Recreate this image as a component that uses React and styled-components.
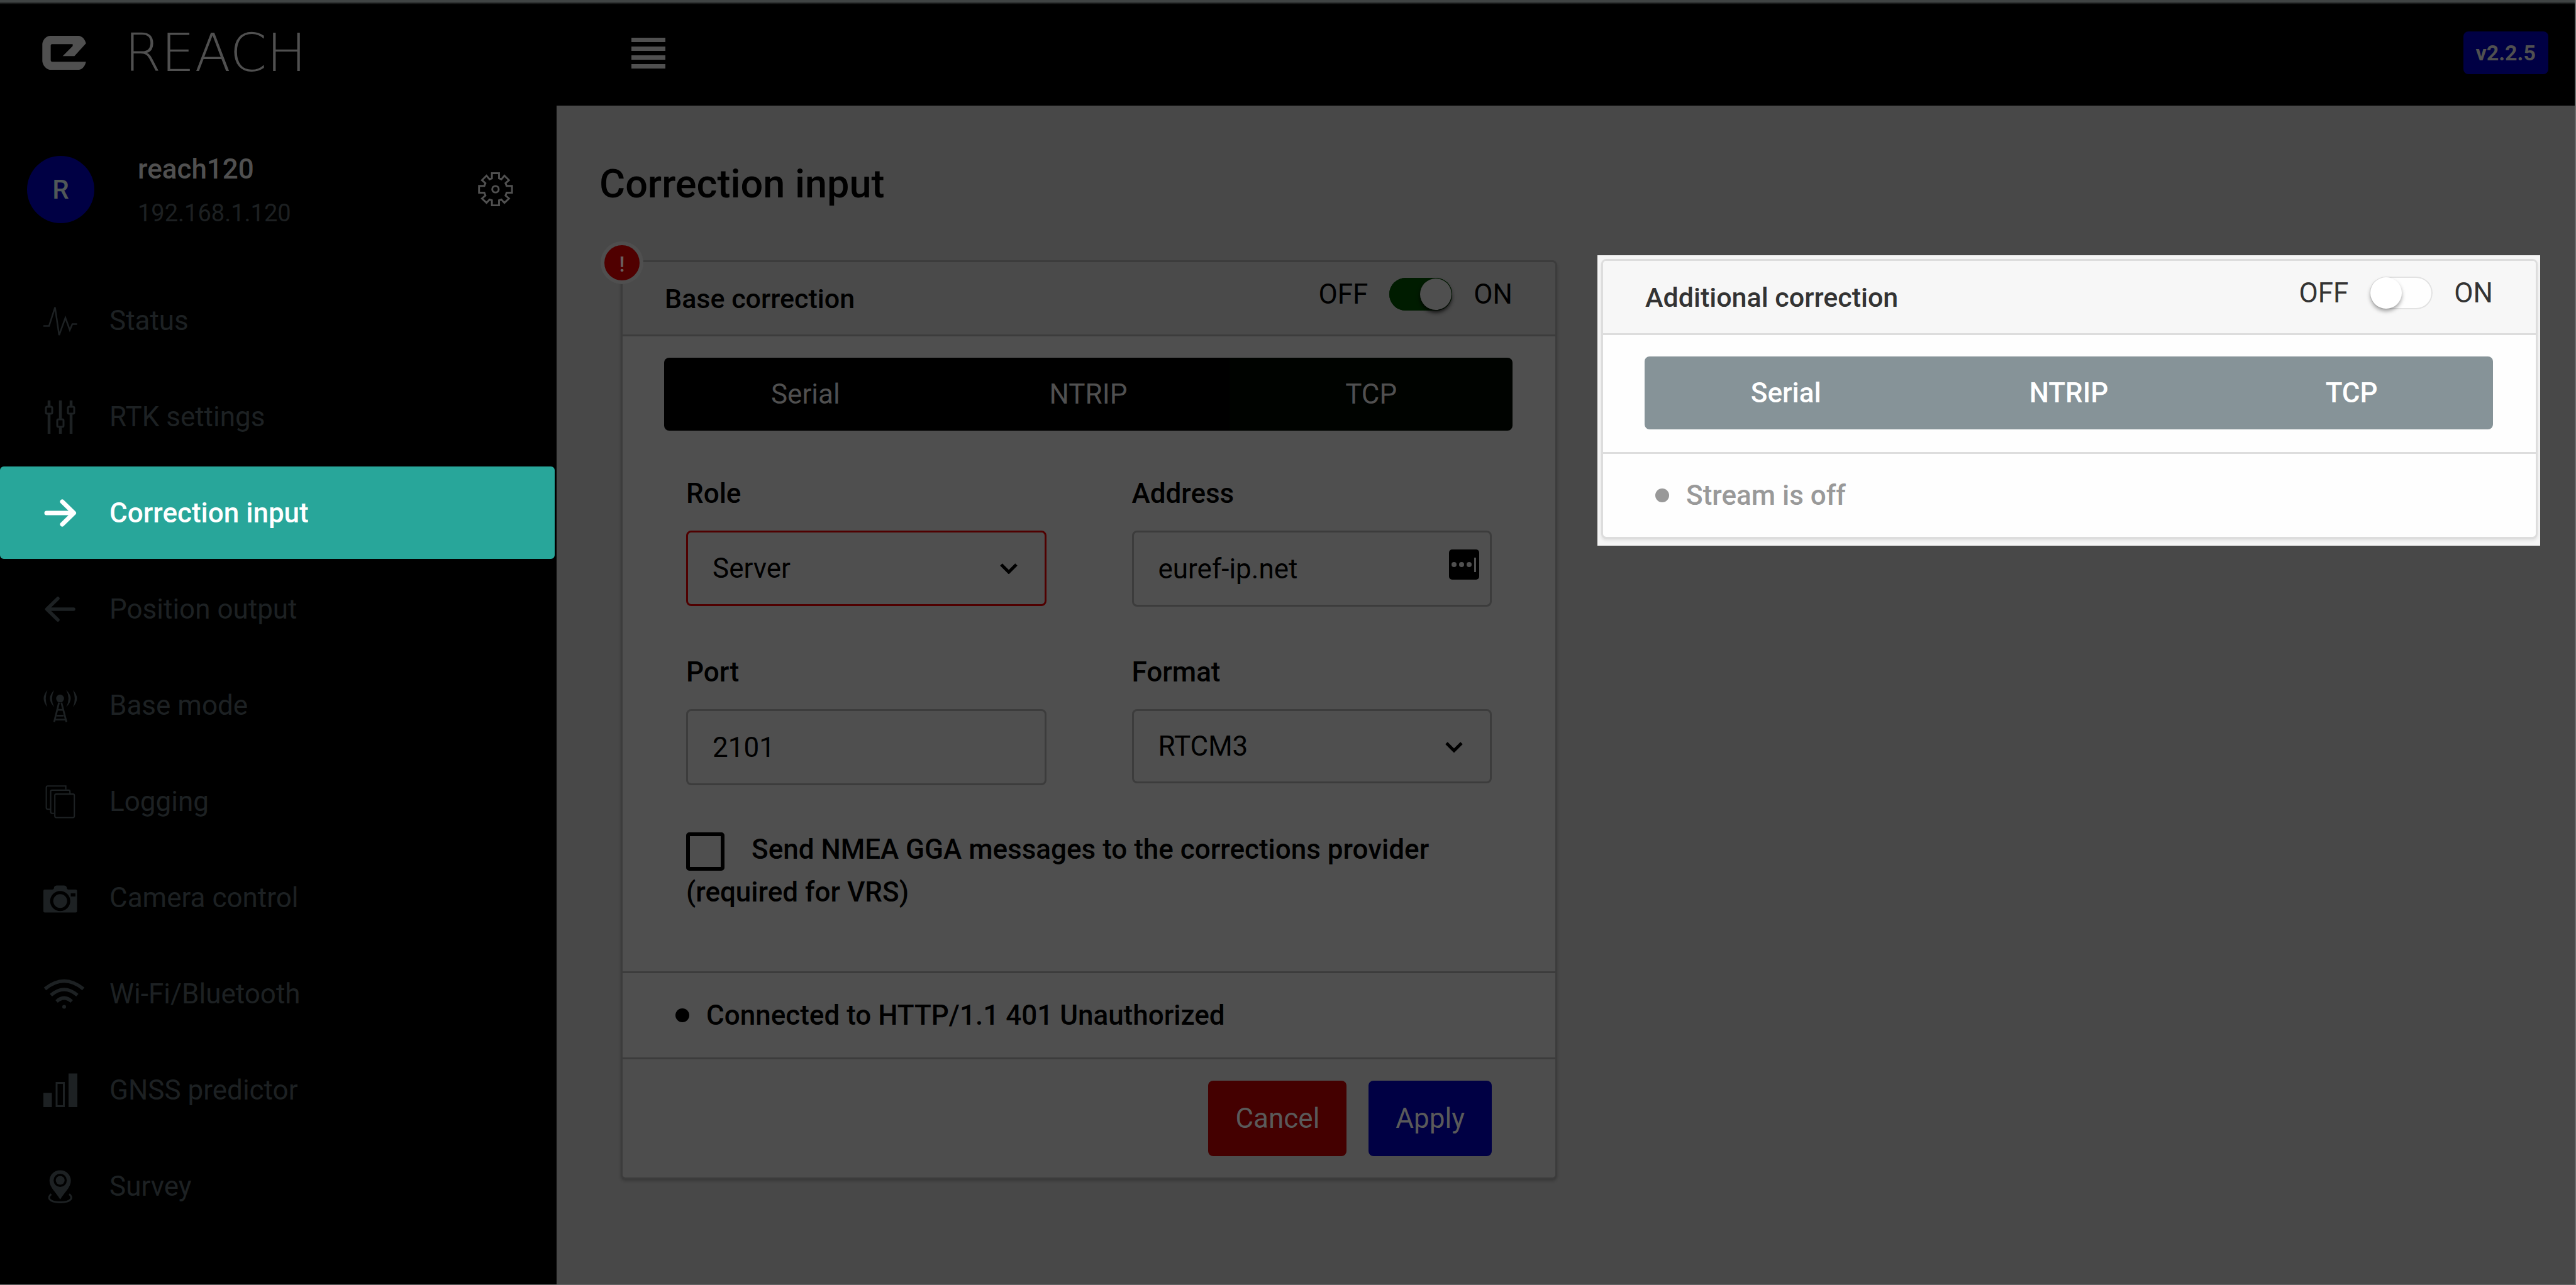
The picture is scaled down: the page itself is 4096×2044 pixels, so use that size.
import React from "react";
import styled, { createGlobalStyle } from "styled-components";

const GlobalStyle = createGlobalStyle`
  *, *::before, *::after { box-sizing: border-box; }
  html, body { margin: 0; background: #484848; }
  body, button, input, select {
    font-family: Roboto, "Liberation Sans", sans-serif;
    font-size: 44px;
    font-weight: 400;
  }
`;

const Page = styled.div`
  display: grid;
  grid-template-columns: 885px 1fr;
  grid-template-rows: 168px 1fr;
  min-height: 100vh;
  border-right: 2px solid #6c6c6c;
  border-bottom: 1px solid #6c6c6c;
  background: #484848;
`;

const Header = styled.header`
  grid-column: 1 / -1;
  display: grid;
  grid-template-columns: 885px 1fr;
  align-items: center;
  background: linear-gradient(#404444 0, #404444 3px, #000 7px);
`;

const Brand = styled.a`
  display: flex;
  align-items: center;
  gap: 61px;
  padding-left: 67px;
  color: #505050;
  text-decoration: none;
`;

const Wordmark = styled.span`
  font-family: "DejaVu Sans", sans-serif;
  font-size: 84px;
  font-weight: 200;
  line-height: 84px;
`;

const HeaderBar = styled.div`
  display: flex;
  align-items: center;
  justify-content: space-between;
  padding: 0 42px 0 119px;
`;

const IconButton = styled.button`
  display: flex;
  padding: 0;
  border: 0;
  background: none;
  color: #505050;
`;

const Version = styled.span`
  padding: 0 20px;
  border-radius: 8px;
  background: #000044;
  color: #505050;
  font-size: 34px;
  font-weight: 700;
  line-height: 68px;
`;

const Sidebar = styled.aside`
  padding-top: 60px;
  background: #000;
`;

const Profile = styled.div`
  display: flex;
  align-items: center;
  gap: 69px;
  padding: 0 69px 0 43px;
`;

const Avatar = styled.div`
  width: 107px;
  height: 107px;
  border-radius: 50%;
  background: #000044;
  color: #505858;
  font-size: 42px;
  font-weight: 500;
  line-height: 107px;
  text-align: center;
`;

const Identity = styled.div`
  flex: 1;
  padding-top: 6px;
  line-height: 70px;
`;

const DeviceName = styled.div`
  color: #505050;
  font-weight: 500;
`;

const DeviceAddress = styled.div`
  color: #1d2022;
  font-size: 38px;
`;

const Nav = styled.nav`
  display: flex;
  flex-direction: column;
  gap: 6px;
  margin: 62px 3px 0 0;
`;

const NavLink = styled.a`
  display: flex;
  align-items: center;
  gap: 51px;
  height: 147px;
  padding-left: 69px;
  border-radius: 6px;
  background: ${(p) => (p.$active ? "#28a69a" : "transparent")};
  color: ${(p) => (p.$active ? "#fff" : "#1d2123")};
  font-weight: ${(p) => (p.$active ? 500 : 400)};
  text-decoration: none;
`;

const NavIcon = styled.svg`
  flex: none;
  width: 54px;
  height: 54px;
  overflow: visible;
  fill: none;
  stroke: currentColor;
`;

const Main = styled.main`
  padding: 87px 59px 0 68px;
`;

const Title = styled.h1`
  margin: 0 0 83px;
  color: #000;
  font-size: 63px;
  font-weight: 500;
  line-height: 76px;
`;

const Cards = styled.div`
  display: grid;
  grid-template-columns: 1fr 1fr;
  align-items: start;
  gap: 70px;
  padding-left: 34px;
`;

const Card = styled.section`
  position: relative;
  border: 3px solid ${(p) => (p.$lit ? "#dddddd" : "#3c3c3c")};
  border-radius: 8px;
  background: ${(p) => (p.$lit ? "#fefefe" : "#4f4f4f")};
  box-shadow: 0 3px 4px ${(p) => (p.$lit ? "rgba(0, 0, 0, 0.08)" : "rgba(0, 0, 0, 0.2)")};
  color: ${(p) => (p.$lit ? "#333333" : "#000")};
`;

const Spotlight = styled.div`
  margin: -8px -4px 0 -6px;
  padding: 6px 4px 11px 6px;
  background: #f5f5f5;
`;

const AlertBadge = styled.span`
  position: absolute;
  top: -33px;
  left: -35px;
  width: 68px;
  height: 68px;
  border: 6px solid #4f4f4f;
  border-radius: 50%;
  background: #500000;
  color: #6a6060;
  font-size: 34px;
  font-weight: 500;
  line-height: 60px;
  text-align: center;
`;

const CardHeader = styled.header`
  display: flex;
  align-items: center;
  justify-content: space-between;
  height: 118px;
  padding: 0 68px 0 67px;
  border-bottom: 3px solid ${(p) => (p.$lit ? "#dddddd" : "#3c3c3c")};
  border-radius: 5px 5px 0 0;
  background: ${(p) => (p.$lit ? "#f7f7f7" : "#4a4a4a")};
`;

const CardTitle = styled.h2`
  margin: 0;
  font-size: 43px;
  font-weight: 500;
`;

const SwitchLabel = styled.label`
  display: flex;
  align-items: center;
  gap: 34px;
  margin-bottom: 14px;
`;

const Switch = styled.input`
  appearance: none;
  display: flex;
  justify-content: ${(p) => (p.checked ? "flex-end" : "flex-start")};
  width: 100px;
  height: 52px;
  margin: 0;
  padding: 1px;
  border-radius: 26px;
  background: ${(p) => (p.checked ? "#001c00" : "#fefefe")};
  box-shadow: 0 0 0 2px ${(p) => (p.$lit ? "#e2e2e2" : "#001c00")} inset;

  &::before {
    content: "";
    width: 50px;
    height: 50px;
    border-radius: 50%;
    background: ${(p) => (p.$lit ? "#fff" : "#4f4f4f")};
    box-shadow: 0 4px 6px ${(p) => (p.$lit ? "rgba(0, 0, 0, 0.35)" : "rgba(0, 0, 0, 0.8)")};
  }
`;

const Tabs = styled.div`
  display: grid;
  grid-template-columns: repeat(3, 1fr);
  margin: 34px 68px 0 66px;
  overflow: hidden;
  border-radius: 8px;
`;

const Tab = styled.button`
  height: 116px;
  padding: 0;
  border: 0;
  background: ${(p) => (p.$lit ? "#869398" : p.$active ? "#000300" : "#000")};
  color: ${(p) => (p.$lit ? "#fff" : "#505050")};
  font-weight: ${(p) => (p.$lit ? 500 : 400)};
`;

const Form = styled.form`
  padding: 0 101px;
`;

const Fields = styled.div`
  display: grid;
  grid-template-columns: 1fr 1fr;
  align-items: start;
  gap: 74px 136px;
  padding-top: 70px;
`;

const Field = styled.div`
  display: flex;
  flex-direction: column;
  gap: 29px;
`;

const FieldLabel = styled.label`
  font-weight: 500;
  line-height: 60px;
`;

const Control = styled.div`
  position: relative;
`;

const TextBox = styled.input`
  display: block;
  width: 100%;
  height: 121px;
  padding: 0 39px;
  border: 3px solid #3c3c3c;
  border-radius: 8px;
  background: transparent;
  color: #000;
`;

const Select = styled.select`
  appearance: none;
  display: block;
  width: 100%;
  height: ${(p) => (p.$invalid ? 120 : 118)}px;
  padding: 0 39px;
  border: 3px solid ${(p) => (p.$invalid ? "#500000" : "#3c3c3c")};
  border-radius: 8px;
  background: transparent;
  color: #000;
`;

const Chevron = styled.svg`
  position: absolute;
  top: 51px;
  right: 46px;
  width: 28px;
  height: 18px;
  fill: none;
  stroke: #000;
  stroke-width: 5;
  pointer-events: none;
`;

const Filler = styled.svg`
  position: absolute;
  top: 30px;
  right: 20px;
  width: 48px;
  height: 48px;
`;

const CheckLabel = styled.label`
  display: block;
  margin-top: 68px;
  font-weight: 500;
  line-height: 68px;
`;

const Checkbox = styled.input`
  appearance: none;
  width: 61px;
  height: 61px;
  margin: 0 43px 0 0;
  border: 6px solid #000;
  border-radius: 5px;
  vertical-align: middle;
`;

const Status = styled.div`
  display: flex;
  align-items: center;
  gap: 27px;
  height: ${(p) => (p.$lit ? 135 : 137)}px;
  margin-top: ${(p) => (p.$lit ? 36 : 92)}px;
  padding-left: ${(p) => (p.$lit ? 83 : 84)}px;
  border-top: 3px solid ${(p) => (p.$lit ? "#dddddd" : "#3c3c3c")};
  color: ${(p) => (p.$lit ? "#999999" : "#000")};
  font-weight: 500;

  &::before {
    content: "";
    width: 22px;
    height: 22px;
    border-radius: 50%;
    background: currentColor;
  }
`;

const Actions = styled.footer`
  display: flex;
  justify-content: flex-end;
  gap: 35px;
  padding: 34px 101px;
  border-top: 3px solid #3c3c3c;
  border-radius: 0 0 5px 5px;
  background: #4d4d4d;
`;

const ActionButton = styled.button`
  height: 120px;
  padding: 0 43px;
  border: 0;
  border-radius: 8px;
  background: ${(p) => (p.$danger ? "#440000" : "#000044")};
  color: #5a5a5a;
`;

const icons = {
  status: (
    <path strokeWidth="2.5" d="M0 35.5H9L18.5 6L25 50L35 22.5L42 42L46 32.5H53.5" />
  ),
  sliders: (
    <g strokeWidth="3">
      <path strokeWidth="4.5" d="M9 1V11M9 22V54M27 1V31M27 43V54M44 1V11M44 22V54" />
      <rect x="4" y="11" width="10" height="11" rx="2" />
      <rect x="22" y="31" width="10" height="12" rx="2" />
      <rect x="39" y="11" width="10" height="11" rx="2" />
    </g>
  ),
  right: (
    <path strokeWidth="7" strokeLinecap="round" strokeLinejoin="round" d="M5 27H48M30 9L48.500 27L30 45" />
  ),
  left: (
    <path strokeWidth="5.500" strokeLinecap="round" strokeLinejoin="round" d="M48 27H6M23 10L5.500 27L23 44" />
  ),
  antenna: (
    <g>
      <circle cx="188" cy="128" r="36" fill="currentColor" stroke="none" />
      <path strokeWidth="16" d="M178 165L134 342M200 165L246 342M168 232H210M158 284H220M146 320H234" />
      <path
        fill="currentColor"
        stroke="none"
        d="M72 52Q4 128 72 206Q42 128 72 52ZM134 52Q56 128 134 206Q94 128 134 52ZM244 52Q326 128 244 206Q286 128 244 52ZM306 52Q378 128 306 206Q338 128 306 52Z"
      />
    </g>
  ),
  logging: (
    <g strokeWidth="12">
      <rect x="140" y="1006" width="178" height="214" rx="12" />
      <path d="M278 1000V984Q278 970 266 970H114Q102 970 102 982V1168Q102 1182 114 1182H136" />
      <path d="M240 964V932H76Q62 932 62 946V1132Q62 1144 76 1144H98" />
    </g>
  ),
  camera: (
    <g stroke="none" fill="currentColor">
      <path
        fillRule="evenodd"
        d="M2 14H14Q17 14 17 10Q18 7.500 21 7.500H33Q36 7.500 37 10Q37 14 40 14H51.500Q53.500 14 53.500 16V48.500Q53.500 50.500 51.500 50.500H2Q0 50.500 0 48.500V16Q0 14 2 14ZM43.500 20V25H51V20ZM26.700 16.200A16 16 0 1 0 26.700 48.200A16 16 0 1 0 26.700 16.200Z"
      />
      <circle cx="26.7" cy="32.2" r="11" />
    </g>
  ),
  wifi: (
    <g strokeWidth="5.500">
      <path d="M2.500 19Q33 -6 63.500 19M12 29Q33 11 54 29M21 39Q33 28 45 39" />
      <circle cx="33" cy="47.500" r="3" fill="currentColor" stroke="none" />
    </g>
  ),
  bars: (
    <g>
      <path fill="currentColor" stroke="none" d="M0 31.500H13.500V54H0ZM40 0.500H54V54H40Z" />
      <rect x="21" y="15.500" width="11.500" height="37" strokeWidth="3" />
    </g>
  ),
  pin: (
    <g>
      <path
        fill="currentColor"
        stroke="none"
        fillRule="evenodd"
        d="M26.700 1.500C36.500 1.500 43.700 9 43.700 18C43.700 29 33 37 26.700 48C20.500 37 9.700 29 9.700 18C9.700 9 17 1.500 26.700 1.500ZM26.700 7A10.500 10.500 0 1 0 26.700 28A10.500 10.500 0 1 0 26.700 7Z"
      />
      <circle cx="26.700" cy="17.500" r="7" fill="currentColor" stroke="none" />
      <path strokeWidth="3" d="M12.500 39.500C6 44 7.500 52.500 26.700 52.500S47.500 44 41 39.500" />
    </g>
  ),
};

const navItems = [
  { label: "Status", icon: "status" },
  { label: "RTK settings", icon: "sliders" },
  { label: "Correction input", icon: "right", active: true },
  { label: "Position output", icon: "left" },
  { label: "Base mode", icon: "antenna", box: "35.600 35.600 310 310" },
  { label: "Logging", icon: "logging", box: "35.600 919 310 310" },
  { label: "Camera control", icon: "camera" },
  { label: "Wi-Fi/Bluetooth", icon: "wifi" },
  { label: "GNSS predictor", icon: "bars" },
  { label: "Survey", icon: "pin" },
];

const streams = ["Serial", "NTRIP", "TCP"];

function StreamTabs({ active, lit }) {
  return (
    <Tabs>
      {streams.map((name) => (
        <Tab key={name} type="button" $active={name === active} $lit={lit}>
          {name}
        </Tab>
      ))}
    </Tabs>
  );
}

function StreamHeader({ title, on, lit }) {
  return (
    <CardHeader $lit={lit}>
      <CardTitle>{title}</CardTitle>
      <SwitchLabel>
        <span>OFF</span>
        <Switch type="checkbox" role="switch" checked={on} readOnly $lit={lit} />
        <span>ON</span>
      </SwitchLabel>
    </CardHeader>
  );
}

function SelectField({ id, label, value, invalid }) {
  return (
    <Field>
      <FieldLabel htmlFor={id}>{label}</FieldLabel>
      <Control>
        <Select id={id} defaultValue={value} $invalid={invalid}>
          <option>{value}</option>
        </Select>
        <Chevron viewBox="0 0 28 18">
          <path d="M2 3L14 15L26 3" />
        </Chevron>
      </Control>
    </Field>
  );
}

function TextField({ id, label, value, children }) {
  return (
    <Field>
      <FieldLabel htmlFor={id}>{label}</FieldLabel>
      <Control>
        <TextBox id={id} type="text" defaultValue={value} />
        {children}
      </Control>
    </Field>
  );
}

export default function App() {
  return (
    <>
      <GlobalStyle />
      <Page>
        <Header>
          <Brand href="#">
            <svg width="70" height="54" viewBox="57 58 401 312" fill="currentColor">
              <path d="M127 58H388C425 60 450 92 458 128L352 244H244L336 152V134H146Q134 134 134 146V284Q134 296 146 296H458C450 330 430 366 394 370H124C84 360 62 326 57 292V132C62 98 84 64 127 58Z" />
            </svg>
            <Wordmark>REACH</Wordmark>
          </Brand>
          <HeaderBar>
            <IconButton type="button" aria-label="Toggle menu">
              <svg width="54" height="49" viewBox="0 0 54 49" fill="currentColor">
                <path d="M0 0H54V7H0ZM0 14H54V21H0ZM0 28H54V35H0ZM0 42H54V49H0Z" />
              </svg>
            </IconButton>
            <Version>v2.2.5</Version>
          </HeaderBar>
        </Header>
        <Sidebar>
          <Profile>
            <Avatar>R</Avatar>
            <Identity>
              <DeviceName>reach120</DeviceName>
              <DeviceAddress>192.168.1.120</DeviceAddress>
            </Identity>
            <IconButton type="button" aria-label="Settings">
              <svg width="56" height="56" viewBox="73 83 326 326" fill="none" stroke="currentColor" strokeWidth="17">
                <path d="M202 98H268V146L290 154L318 120L360 162L328 190L338 215H388V278H338L328 304L360 332L318 372L290 342L268 348V395H202V348L180 342L152 372L110 332L142 304L132 278H83V215H132L142 190L110 162L152 120L180 154L202 146Z" />
                <circle cx="235" cy="246" r="30" />
              </svg>
            </IconButton>
          </Profile>
          <Nav>
            {navItems.map(({ label, icon, active, box }) => (
              <NavLink key={label} href="#" $active={active}>
                <NavIcon viewBox={box || "0 0 54 54"}>{icons[icon]}</NavIcon>
                {label}
              </NavLink>
            ))}
          </Nav>
        </Sidebar>
        <Main>
          <Title>Correction input</Title>
          <Cards>
            <Card>
              <AlertBadge>!</AlertBadge>
              <StreamHeader title="Base correction" on />
              <StreamTabs active="TCP" />
              <Form>
                <Fields>
                  <SelectField id="role" label="Role" value="Server" invalid />
                  <TextField id="address" label="Address" value="euref-ip.net">
                    <Filler viewBox="0 0 48 48">
                      <rect width="48" height="48" rx="5" fill="#000" />
                      <g fill="#505050">
                        <circle cx="8" cy="24" r="4" />
                        <circle cx="20" cy="24" r="4" />
                        <circle cx="32" cy="24" r="4" />
                        <rect x="40" y="13" width="3" height="23" />
                      </g>
                    </Filler>
                  </TextField>
                  <TextField id="port" label="Port" value="2101" />
                  <SelectField id="format" label="Format" value="RTCM3" />
                </Fields>
                <CheckLabel>
                  <Checkbox type="checkbox" />
                  Send NMEA GGA messages to the corrections provider (required for VRS)
                </CheckLabel>
              </Form>
              <Status>Connected to HTTP/1.1 401 Unauthorized</Status>
              <Actions>
                <ActionButton type="button" $danger>
                  Cancel
                </ActionButton>
                <ActionButton type="button">Apply</ActionButton>
              </Actions>
            </Card>
            <Spotlight>
              <Card $lit>
                <StreamHeader title="Additional correction" on={false} lit />
                <StreamTabs lit />
                <Status $lit>Stream is off</Status>
              </Card>
            </Spotlight>
          </Cards>
        </Main>
      </Page>
    </>
  );
}
